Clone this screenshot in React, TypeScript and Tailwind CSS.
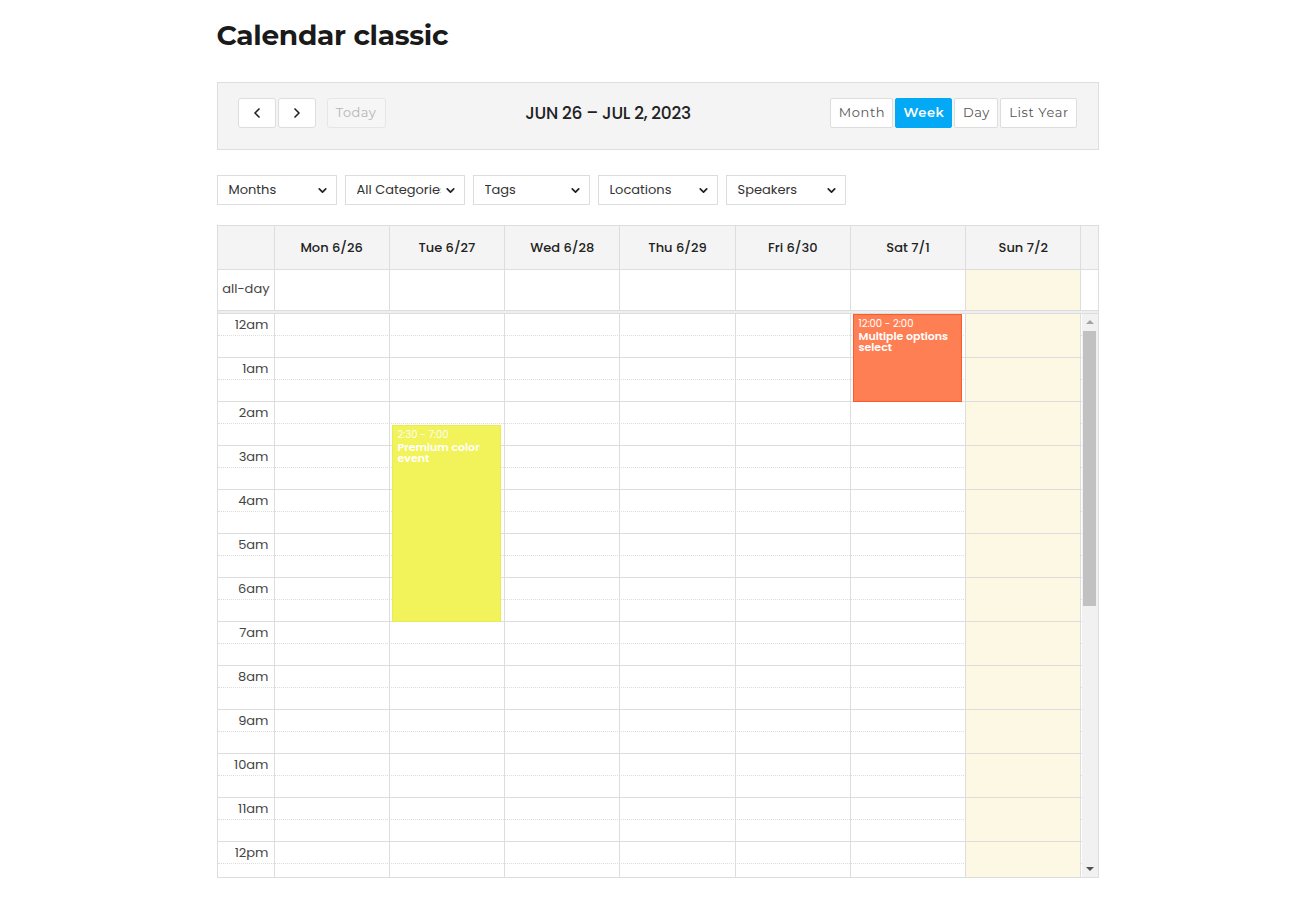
import { ChevronLeft, ChevronRight, ChevronDown } from "lucide-react";

const days = ["Mon 6/26", "Tue 6/27", "Wed 6/28", "Thu 6/29", "Fri 6/30", "Sat 7/1", "Sun 7/2"];
const filters = [
  { label: "Months", w: "w-[120px]" },
  { label: "All Categories", w: "w-[120px]" },
  { label: "Tags", w: "w-[117px]" },
  { label: "Locations", w: "w-[120px]" },
  { label: "Speakers", w: "w-[120px]" },
];
const hours = Array.from({ length: 24 }, (_, h) =>
  h === 0 ? "12am" : h < 12 ? `${h}am` : h === 12 ? "12pm" : `${h - 12}pm`
);

const font = "font-['Poppins','Inter','Noto_Sans',sans-serif]";
const btnFont = "font-['Montserrat','Inter',sans-serif]";

function DayCells() {
  return (
    <>
      {days.map((d, i) => (
        <div key={d} className={`border-r border-[#ddd] ${i === 6 ? "bg-[#fcf8e3]" : ""}`} />
      ))}
    </>
  );
}

function Toolbar() {
  return (
    <div className="flex h-[68px] items-start justify-between border border-[#ddd] bg-[#f4f4f4] px-[20px] pt-[15px]">
      <div className="flex items-center gap-[11px]">
        <div className="flex gap-[2px]">
          <button className="flex h-[30px] w-[38px] items-center justify-center rounded-[3px] border border-[#ddd] bg-white text-[#222]">
            <ChevronLeft size={16} strokeWidth={2.5} />
          </button>
          <button className="flex h-[30px] w-[38px] items-center justify-center rounded-[3px] border border-[#ddd] bg-white text-[#222]">
            <ChevronRight size={16} strokeWidth={2.5} />
          </button>
        </div>
        <button
          className={`h-[30px] w-[59px] rounded-[3px] border border-[#e6e6e6] bg-[#f6f6f6] text-[13px] tracking-[0.5px] text-[#b5b5b5] ${btnFont}`}
        >
          Today
        </button>
      </div>
      <h2 className="mt-[4px] text-[17px] font-medium leading-[22px] tracking-[-0.3px] text-[#222]">
        JUN 26 – JUL 2, 2023
      </h2>
      <div className={`flex gap-[2px] text-[13px] tracking-[0.6px] ${btnFont}`}>
        <button className="h-[30px] w-[63px] rounded-[2px] border border-[#ddd] bg-white text-[#555]">Month</button>
        <button className="h-[30px] w-[57px] rounded-[2px] border border-[#03a9f4] bg-[#03a9f4] font-semibold text-white">
          Week
        </button>
        <button className="h-[30px] w-[44px] rounded-[2px] border border-[#ddd] bg-white text-[#555]">Day</button>
        <button className="h-[30px] w-[77px] rounded-[2px] border border-[#ddd] bg-white text-[#555]">List Year</button>
      </div>
    </div>
  );
}

function Filters() {
  return (
    <div className="mt-[25px] flex gap-[8px]">
      {filters.map((f) => (
        <div
          key={f.label}
          className={`flex h-[30px] items-center border border-[#ddd] bg-white pl-[11px] pr-[7px] text-[13px] text-[#333] ${f.w}`}
        >
          <span className="flex-1 overflow-hidden whitespace-nowrap">{f.label}</span>
          <ChevronDown size={13} strokeWidth={3.2} className="ml-[3px] shrink-0 text-[#222]" />
        </div>
      ))}
    </div>
  );
}

function Scrollbar() {
  return (
    <div className="flex w-[16px] flex-col items-center bg-[#f1f1f1]">
      <div className="mt-[6px] h-0 w-0 border-x-[4px] border-b-[4px] border-x-transparent border-b-[#a3a3a3]" />
      <div className="mt-[7px] h-[275px] w-[13px] bg-[#c1c1c1]" />
      <div className="flex-1" />
      <div className="mb-[6px] h-0 w-0 border-x-[4px] border-t-[4px] border-x-transparent border-t-[#505050]" />
    </div>
  );
}

function TimeGrid() {
  return (
    <div className="flex">
      <div className="relative h-[563px] w-[864px] overflow-hidden">
        {hours.map((h) => (
          <div key={h}>
            <div className="grid h-[22px] grid-cols-[57px_repeat(7,1fr)] border-b border-dotted border-[#ddd]">
              <div className="border-r border-[#ddd] pr-[5px] text-right text-[13px] leading-[22px] text-[#444]">{h}</div>
              <DayCells />
            </div>
            <div className="grid h-[22px] grid-cols-[57px_repeat(7,1fr)] border-b border-[#ddd]">
              <div className="border-r border-[#ddd]" />
              <DayCells />
            </div>
          </div>
        ))}

        <div className="absolute left-[174px] top-[111px] h-[197px] w-[109px] border border-[#e9eb55] bg-[#f2f35b] px-[5px] pt-[2px] text-white">
          <div className="text-[10px] leading-[14px] opacity-90">2:30 - 7:00</div>
          <div className="text-[11px] font-semibold leading-[11px]">Premium color event</div>
        </div>
        <div className="absolute left-[635px] top-0 h-[88px] w-[109px] border border-[#ff5a2e] bg-[#ff7f55] px-[5px] pt-[2px] text-white">
          <div className="text-[10px] leading-[14px]">12:00 - 2:00</div>
          <div className="text-[11px] font-semibold leading-[11px]">Multiple options select</div>
        </div>
      </div>
      <Scrollbar />
    </div>
  );
}

function Calendar() {
  return (
    <div className="mt-[20px] border border-[#ddd]">
      <div className="grid h-[44px] grid-cols-[57px_repeat(7,1fr)_16px] border-b border-[#ddd] bg-[#f4f4f4]">
        <div className="border-r border-[#ddd]" />
        {days.map((d) => (
          <div
            key={d}
            className="flex items-center justify-center border-r border-[#ddd] text-[13px] font-medium text-[#222]"
          >
            {d}
          </div>
        ))}
        <div />
      </div>
      <div className="grid h-[40px] grid-cols-[57px_repeat(7,1fr)_16px]">
        <div className="border-r border-[#ddd] pr-[4px] text-right text-[13px] leading-[38px] text-[#444]">all-day</div>
        <DayCells />
        <div />
      </div>
      <div className="h-[4px] border-y border-[#ddd] bg-[#eee]" />
      <TimeGrid />
    </div>
  );
}

export default function App() {
  return (
    <div className={`min-h-screen bg-white ${font}`}>
      <div className="mx-auto w-[882px] pt-[17px]">
        <h1 className="font-['Montserrat','Inter',sans-serif] text-[28px] font-bold leading-[36px] tracking-[-0.3px] text-[#1a1a1a]">
          Calendar classic
        </h1>
        <div className="mt-[29px]">
          <Toolbar />
        </div>
        <Filters />
        <Calendar />
      </div>
    </div>
  );
}
